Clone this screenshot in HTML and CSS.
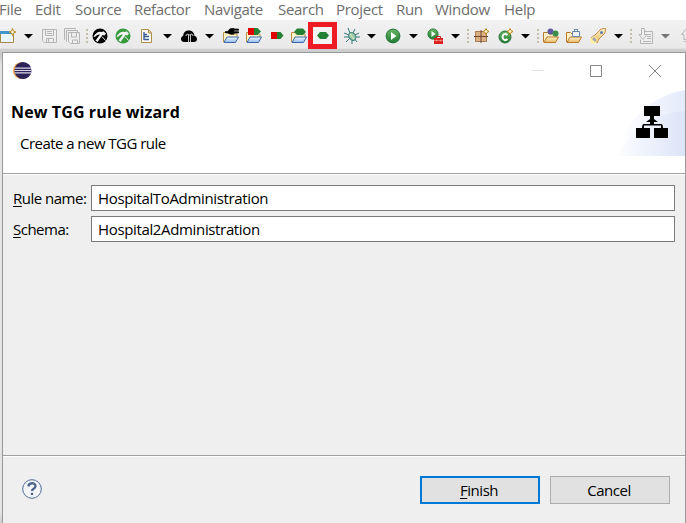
FILE: index.html
```
<!DOCTYPE html>
<html lang="en">
<head>
<meta charset="utf-8">
<title>New TGG rule wizard</title>
<link rel="stylesheet" href="styles.css">
</head>
<body>
<svg class="defs" aria-hidden="true">
  <defs>
    <linearGradient id="gold" x2="0" y2="1"><stop stop-color="#fff3cf"/><stop offset="1" stop-color="#e9b95e"/></linearGradient>
    <linearGradient id="blue" x2="0" y2="1"><stop stop-color="#f2f8ff"/><stop offset="1" stop-color="#8fb9ec"/></linearGradient>
    <linearGradient id="green" x2="0" y2="1"><stop stop-color="#68b661"/><stop offset="1" stop-color="#1f7d35"/></linearGradient>
    <symbol id="arrow" viewBox="0 0 9 16"><path d="M0 6h9L4.500 10.500z"/></symbol>
    <symbol id="sep" viewBox="0 0 3 16"><path d="M1 1h2v2H1zM1 5h2v2H1zM1 9h2v2H1zM1 13h2v2H1z" fill="#c6bfae"/></symbol>
    <symbol id="folder" viewBox="0 0 16 16"><path d="M.5 14V4.500h5L7 6h7v3" fill="#fff3c8" stroke="#b99345"/><path d="M1 14.500 4 9h11.500l-3 5.500z" fill="url(#blue)" stroke="#3c68a8"/></symbol>
    <symbol id="goldfolder" viewBox="0 0 16 16"><path d="M.5 14V4.500h4L6 6h7v3" fill="#fff2ca" stroke="#b9792b"/><path d="M1 14.500 4 9h11.500l-3 5.500z" fill="url(#gold)" stroke="#b9792b"/></symbol>
    <symbol id="spark" viewBox="0 0 7 7"><path d="m3.500.5 1 2 2 1-2 1-1 2-1-2-2-1 2-1z" fill="#fff8cd" stroke="#b88418"/></symbol>
    <symbol id="hammer" viewBox="0 0 16 16"><circle cx="8" cy="8" r="7.500" fill="currentColor"/><path d="M1.500 8.500C4 4.500 6.500 3 10 4l1.500-.8L14 5.500 12.500 7.500l-2-.5L5.500 14 3.500 12.500 8 6.500C6 6 4.500 7.500 2.500 9z" fill="#f3f3f3"/><path d="m10 8.500 3.500 4" stroke="#f3f3f3"/></symbol>
    <symbol id="play" viewBox="0 0 16 16"><circle cx="8" cy="8" r="6.900" fill="url(#green)" stroke="#23753a"/><path d="M6 4v8l5.500-4z" fill="#fff"/></symbol>
    <linearGradient id="haze"><stop stop-color="#fbfcff"/><stop offset="1" stop-color="#dce4f7"/></linearGradient>
    <linearGradient id="haze2"><stop stop-color="#fff"/><stop offset="1" stop-color="#e3eafa"/></linearGradient>
  </defs>
</svg>

<nav class="menu">
  <span class="m-file">File</span><span>Edit</span><span>Source</span><span>Refactor</span><span>Navigate</span><span>Search</span><span>Project</span><span>Run</span><span>Window</span><span>Help</span>
</nav>

<div class="toolbar">
  <svg class="icon" viewBox="0 0 16 16"><path d="M.5 3.500h13v11H.5z" fill="#eaf6fb" stroke="#a88a48"/><path d="M0 3h13v3H0z" fill="#4196c8"/><path d="m12.500.5 1 2.500 2.500 1-2.500 1-1 2.500-1-2.500L9 4l2.500-1z" fill="#fff6c8" stroke="#b88b2d"/></svg>
  <svg class="drop"><use href="#arrow"/></svg>
  <svg class="icon off" viewBox="0 0 16 16"><path d="M.5 1.500h14v13h-12l-2-2zM3.500 1.500v6h8v-6M4.500 14.500v-4h7v4M6.500 11v3M5 3.500h5M5 5.500h5"/></svg>
  <svg class="icon off" viewBox="0 0 16 16"><path d="M4.500 4.500h11v11h-9l-2-2zM7.500 5v4h5V5M8.500 15v-3h5v3M3 13.500h-.5v-11h11V4M1 11.500H.5V.5h11v1"/></svg>
  <svg class="sep"><use href="#sep"/></svg>
  <svg class="icon"><use href="#hammer"/></svg>
  <svg class="icon leaf"><use href="#hammer"/></svg>
  <svg class="icon" viewBox="0 0 16 16"><path d="M2.500 1.500h7l3 3v10h-10z" fill="#fffdf3" stroke="#ad8d48"/><path d="M9.500 2v3h3" fill="#ecd49a" stroke="#ad8d48"/><path d="M5 4v8M5 6.500h3M5 8.500h5M5 11.500h5" stroke="#3a5d98" stroke-width="1.400"/></svg>
  <svg class="drop"><use href="#arrow"/></svg>
  <svg class="icon" viewBox="0 0 16 16"><path d="M3.500 14C1 14 0 12.500 0 11c0-1.600 1-2.700 2.200-3C2.200 4.500 4.500 2.500 8 2.500S13.300 5 13.500 8c1.500.2 2.500 1.400 2.500 3 0 1.800-1.200 3-3.200 3z"/><path d="M7.500 14V7M9.500 14V7M5 8c0-2 1.500-2.500 3.500-1C10.500 5.500 12 6 12 8" fill="none" stroke="#ddd" stroke-width=".9"/></svg>
  <svg class="drop"><use href="#arrow"/></svg>
  <svg class="icon" viewBox="0 0 16 16"><use href="#folder"/><path d="M2.500 3.500H5c1-3 4-3.500 6-3V1h4.500v1.300H11v1.400h4.500V5H11v1C8 6.500 6 6 5 5H2.500z" stroke="#000" stroke-width=".7"/></svg>
  <svg class="icon" viewBox="0 0 16 16"><use href="#folder"/><path d="M2 0h6v7H2z" fill="#e00000"/><path d="M8 0h3.500L15 3.500 11.500 7H8z" fill="#248033"/></svg>
  <svg class="icon" viewBox="0 0 16 16"><path d="M1 4h6v7H1z" fill="#e00000"/><path d="M7 4h3.500L13.500 7.500l-3 3.500H7z" fill="#248033"/></svg>
  <svg class="icon" viewBox="0 0 16 16"><use href="#folder"/><path d="m3 4 3-3.500h6L15 4l-3 3H6z" fill="#248033"/></svg>
  <span class="marked"><svg class="icon" viewBox="0 0 16 16"><path d="m2 7.500 3-3.500h6l3 3.500-3 3.500H5z" fill="#248033"/></svg></span>
  <svg class="icon" viewBox="0 0 16 16"><path d="m4 0 2 5M11 1 9 5M0 5l5 2M15 5l-4 2M0 9h5M11 9h5M2 14l4-4M8 16v-5M13 14l-3-4" stroke="#367879"/><ellipse cx="8" cy="8.500" rx="3.200" ry="4.300" fill="#9ac9a5" stroke="#34787a" transform="rotate(-35 8 8)"/><path d="m6 6 4 5" stroke="#e0f4d6"/></svg>
  <svg class="drop"><use href="#arrow"/></svg>
  <svg class="icon"><use href="#play"/></svg>
  <svg class="drop"><use href="#arrow"/></svg>
  <svg class="icon" viewBox="0 0 16 16"><use href="#play" width="12" height="12"/><path d="M9.500 10V8.500h4V10" fill="none" stroke="#ba1717"/><path d="M7 10h9v6H7z" fill="#db2020"/><path d="M7 12.500h9M9.500 11.500v2M13.500 11.500v2" stroke="#ffaaa0" stroke-width=".6"/></svg>
  <svg class="drop"><use href="#arrow"/></svg>
  <svg class="sep"><use href="#sep"/></svg>
  <svg class="icon" viewBox="0 0 16 16"><path d="M1 3h12v11H1z" fill="#dcb184"/><path d="M1.500 3.500h11v10h-11z" fill="none" stroke="#a97a52"/><path d="M7 2v13M0 8.500h14" fill="none" stroke="#704434"/><use href="#spark" x="8.500" width="7" height="7"/></svg>
  <svg class="icon" viewBox="0 0 16 16"><circle cx="7" cy="9" r="6" fill="url(#green)" stroke="#24743a"/><path d="M9.500 7C7.500 5 4.500 6 4.500 9s3 4 5 2" fill="none" stroke="#fff" stroke-width="2"/><use href="#spark" x="8.500" width="7" height="7"/></svg>
  <svg class="drop"><use href="#arrow"/></svg>
  <svg class="sep"><use href="#sep"/></svg>
  <svg class="icon" viewBox="0 0 16 16"><use href="#goldfolder"/><circle cx="7.500" cy="3.500" r="3" fill="#625aa4"/><circle cx="12.500" cy="5.500" r="3" fill="#398c49"/></svg>
  <svg class="icon" viewBox="0 0 16 16"><use href="#goldfolder"/><path d="M6.500 3.500h7v5h-7z" fill="#eef4fc" stroke="#6b86ad"/><path d="M8.500 3V1.500h3V3" fill="none" stroke="#6b86ad"/></svg>
  <svg class="icon" viewBox="0 0 16 16"><path d="M5 7 11 1l5-1-1 5-6 6-2 4-1-4-3-2-2 1z" fill="url(#gold)" stroke="#b9792b" stroke-width=".8"/><circle cx="11.500" cy="4.500" r="1.500" fill="#5b7eae"/><path d="m4 8 4 4-3 4-4-1-1-4z" fill="#fff0a2"/><path d="m4 9 3 3-2 2-3-3z" fill="#a5a6af"/></svg>
  <svg class="drop"><use href="#arrow"/></svg>
  <svg class="sep"><use href="#sep"/></svg>
  <svg class="icon off" viewBox="0 0 16 16"><path d="M7 3.500h7.500v12h-12v-4M9 6.500h4M9 8.500h4M9 10.500h4M5 13.500h8"/><path d="M3.500.5h3v6H9L5 11.500 1 6.500h2.500z"/></svg>
  <svg class="drop dim"><use href="#arrow"/></svg>
  <svg class="icon off" viewBox="0 0 16 16"><path d="M.5 6.500 5.500.5l5 6H8v5H3v-5z"/><path d="M3 13.500h9"/></svg>
</div>

<div class="workspace">
  <main class="dialog">
    <header class="banner">
      <div class="titlebar">
        <svg class="logo" viewBox="0 0 20 20"><circle cx="9" cy="10" r="9" fill="#f7a14a"/><circle cx="10.500" cy="10" r="9" fill="#2d2258"/><path d="M2 7.500h17M1.500 10h18M2 12.500h17" stroke="#d9d7e8" stroke-width="1.300"/></svg>
        <svg class="controls" viewBox="0 0 130 14"><path d="M0 6.500h12" stroke="#e5e5e5"/><path d="M58.500 1.500h11v11h-11z" fill="none" stroke="#888"/><path d="m117 1 12 12M129 1l-12 12" stroke="#888"/></svg>
      </div>
      <div class="heading">
        <div class="words"><h1>New TGG rule wizard</h1><p>Create a new TGG rule</p></div>
        <svg class="art" viewBox="0 0 66 66"><path d="M0 66C3 31 34 5 66 0v66z" fill="url(#haze2)"/><path d="M0 66C12 37 38 23 66 21v45z" fill="url(#haze)"/><path d="M25 16h16v10h-6v3l4 3h-4v2h7q2 0 2 4h5v10H35V38h7v-2.500H25V38h6v10H17V38h6q0-4 2-4h6v-2h-4l4-3v-3h-6z"/></svg>
      </div>
    </header>
    <section class="form">
      <label for="rule"><u>R</u>ule name:</label><input id="rule" value="HospitalToAdministration">
      <label for="schema"><u>S</u>chema:</label><input id="schema" value="Hospital2Administration">
    </section>
    <footer class="actions">
      <svg class="help" viewBox="0 0 20 20"><circle cx="10" cy="10" r="9.300" fill="#f4f5f8" stroke="#526b96"/><path d="M6.500 7.500C6.500 3.500 13.500 3 13.500 7c0 3-3.500 2.500-3.500 5M10 13.700v2.300" fill="none" stroke="#50658e" stroke-width="2.300"/></svg>
      <button class="finish"><u>F</u>inish</button><button>Cancel</button>
    </footer>
  </main>
</div>
</body>
</html>
```
FILE: styles.css
```
* { box-sizing: border-box; }
body { margin: 0; width: 686px; height: 523px; overflow: hidden; background: #fff; color: #000; font: 15px/20px "Open Sans", "Noto Sans", sans-serif; }
.defs { display: block; width: 0; height: 0; }
svg { display: block; }
.menu { height: 20px; line-height: 18px; display: grid; grid-template-columns: 35px 40px 59px 70px 74px 58px 60px 39px 69px 60px; color: #6d6d6d; white-space: nowrap; }
.menu span { letter-spacing: -.3px; }
.menu .m-file { margin-left: -1px; }

.toolbar { height: 32px; padding-bottom: 1px; display: grid; align-items: center; background: linear-gradient(#f2f2f2, #e9e9e9 88%, #cecece 92%); overflow: hidden;
  grid-template-columns: 24px 18px 22px 21px 7px 23px 24px 24px 18px 24px 18px 23px 24px 21px 17px 36px 23px 18px 24px 18px 24px 15px 8px 24px 23px 15px 7px 23px 24px 24px 15px 9px 23px 20px 16px; }
.icon { width: 16px; height: 16px; }
.drop { width: 9px; height: 16px; }
.sep { width: 3px; height: 16px; }
.leaf { color: #369b3c; }
.dim { fill: #777; }
.off { fill: #eee; stroke: #b5b5b5; }
.marked { width: 29px; height: 27px; display: grid; place-items: center; border: 5px solid #ed1c24; background: #f3f3f3; }
.marked .icon { margin: 0 -1px; }

.workspace { height: 471px; padding-left: 2px; background: linear-gradient(#ccc 4px, #e4e4e4 14px, #e4e4e4 460px, #d0d0d0); }
.dialog { width: 684px; height: 471px; display: flex; flex-direction: column; border: 1px solid #999; border-bottom: 0; background: #efefef; }
.banner { height: 121px; background: #fff; border-bottom: 1px solid #a0a0a0; }
.titlebar { height: 37px; display: flex; justify-content: space-between; align-items: center; padding: 0 23px 2px 10px; }
.logo { width: 19px; height: 19px; }
.controls { width: 130px; height: 14px; }
.heading { display: flex; justify-content: space-between; height: 66px; }
.words { padding: 12px 0 0 8px; }
h1 { margin: 0; font-size: 16px; line-height: 20px; font-weight: 700; letter-spacing: .12px; white-space: nowrap; }
p { margin: 11px 0 0 9px; letter-spacing: -.54px; }
.art { width: 66px; height: 66px; }
.form { height: 281px; display: grid; grid-template-columns: 78px 584px; grid-template-rows: 26px 26px; row-gap: 5px; padding: 10px 0 0 10px; align-items: center; border-top: 1px solid #fff; letter-spacing: -.5px; white-space: nowrap; }
label { padding-bottom: 1px; }
u { text-underline-offset: 2px; text-decoration-thickness: 1px; text-decoration-skip-ink: none; }
input { width: 584px; height: 26px; margin: 0; padding: 0 6px 1px; border: 1px solid #7a7a7a; border-radius: 0; background: #fff; color: #000; font: inherit; letter-spacing: -.35px; outline: 0; }
.actions { flex: 1; display: flex; border-top: 1px solid #a0a0a0; box-shadow: inset 0 1px #fff; padding: 20px 15px 0 19px; }
.help { width: 20px; height: 20px; margin: 3px auto 0 0; }
button { width: 120px; height: 28px; margin: 0 0 0 10px; padding: 0 2px 1px 0; border: 1px solid #adadad; border-radius: 0; background: #e1e1e1; color: #000; font: inherit; letter-spacing: -.45px; }
.finish { border: 2px solid #0078d7; }
```
